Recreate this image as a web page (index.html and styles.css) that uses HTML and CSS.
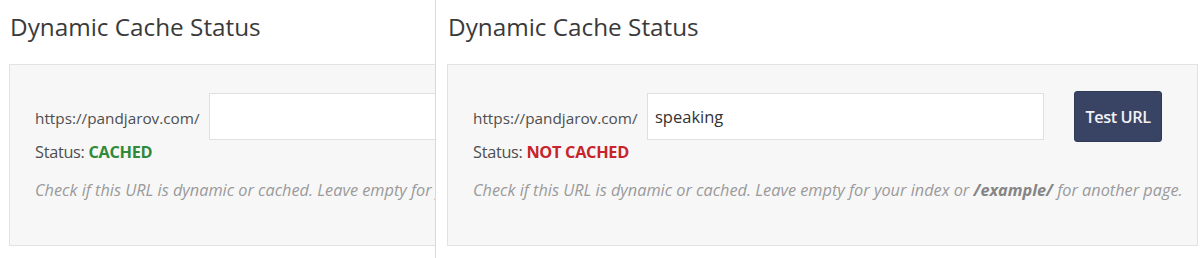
FILE: index.html
```html
<!DOCTYPE html>
<html lang="en">
<head>
<meta charset="utf-8">
<title>Dynamic Cache Status</title>
<link rel="stylesheet" href="styles.css">
</head>
<body>
<div class="panels">
  <section class="panel panel-left">
    <div class="panel-inner">
      <h2 class="title">Dynamic Cache Status</h2>
      <div class="box">
        <div class="row">
          <label class="prefix">https://pandjarov.com/</label>
          <input class="url-input" type="text" value="">
          <button class="btn">Test URL</button>
        </div>
        <p class="status">Status: <span class="cached">CACHED</span></p>
        <p class="help">Check if this URL is dynamic or cached. Leave empty for your index or <b>/example/</b> for another page.</p>
      </div>
    </div>
  </section>
  <section class="panel panel-right">
    <div class="panel-inner">
      <h2 class="title">Dynamic Cache Status</h2>
      <div class="box">
        <div class="row">
          <label class="prefix">https://pandjarov.com/</label>
          <input class="url-input" type="text" value="speaking">
          <button class="btn">Test URL</button>
        </div>
        <p class="status">Status: <span class="not-cached">NOT CACHED</span></p>
        <p class="help">Check if this URL is dynamic or cached. Leave empty for your index or <b>/example/</b> for another page.</p>
      </div>
    </div>
  </section>
</div>
</body>
</html>
```
FILE: styles.css
```css
* { box-sizing: border-box; }
html, body {
  margin: 0;
  padding: 0;
  background: #ffffff;
  font-family: "Open Sans", "Liberation Sans", sans-serif;
  color: #555;
}
.panels {
  display: flex;
  height: 258px;
}
.panel {
  height: 258px;
  overflow: hidden;
}
.panel-left {
  width: 436px;
  flex: 0 0 436px;
  padding-left: 9px;
  border-right: 1px solid #dadada;
}
.panel-right {
  flex: 1;
  padding-left: 11px;
  padding-right: 2px;
}
.panel-inner {
  width: 751px;
}
.title {
  margin: 11px 0 21px 1px;
  font-size: 24.3px;
  line-height: 32px;
  font-weight: 400;
  color: #3a3a3a;
}
.box {
  border: 1px solid #e2e2e2;
  background: #f7f7f7;
  padding: 26px 35px 45px 25px;
}
.row {
  display: flex;
  align-items: center;
  height: 51px;
}
.prefix {
  width: 174px;
  flex: 0 0 174px;
  font-size: 15.3px;
  line-height: 20px;
  color: #4e4e4e;
  padding-top: 3px;
  white-space: nowrap;
}
.url-input {
  width: 398px;
  height: 47px;
  border: 1px solid #e0e0e0;
  background: #fff;
  padding: 0 7px;
  font-family: "Open Sans", "Liberation Sans", sans-serif;
  font-size: 16.5px;
  color: #333;
  outline: none;
}
.btn {
  margin-left: 30px;
  width: 88px;
  height: 51px;
  border: 1px solid #2f3a57;
  border-radius: 3px;
  background: #394464;
  color: #f2f2f5;
  font-family: "Open Sans", "Liberation Sans", sans-serif;
  font-size: 16.3px;
  font-weight: 600;
  letter-spacing: -0.4px;
  padding: 0;
}
.status {
  margin: 0;
  font-size: 16.3px;
  line-height: 20px;
  color: #4e4e4e;
  letter-spacing: -0.3px;
}
.cached {
  color: #2f8a3a;
  font-weight: 700;
}
.not-cached {
  color: #c8242b;
  font-weight: 700;
}
.help {
  margin: 18px 0 0 0;
  font-size: 16.3px;
  line-height: 20px;
  font-style: italic;
  color: #9a9a9a;
  white-space: nowrap;
}
.help b {
  font-weight: 700;
  color: #858585;
}
```
